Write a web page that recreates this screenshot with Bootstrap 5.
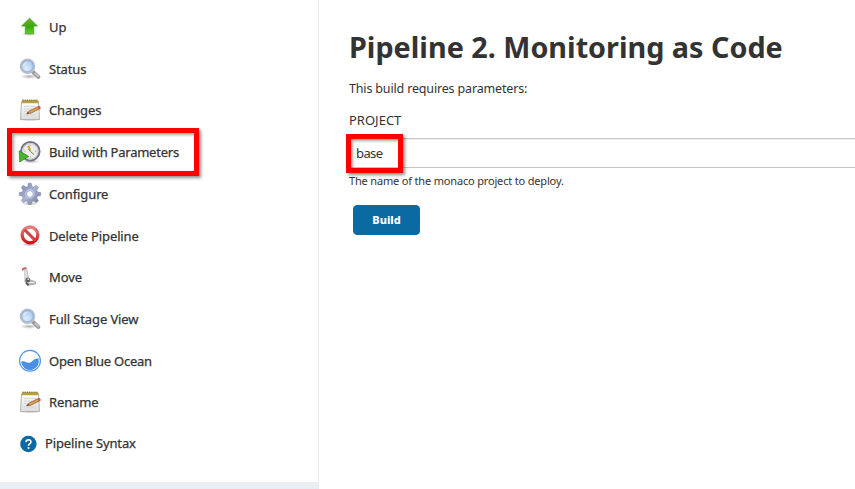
<!DOCTYPE html>
<html lang="en">
<head>
<meta charset="utf-8">
<meta name="viewport" content="width=device-width, initial-scale=1">
<title>Pipeline 2. Monitoring as Code</title>
<link href="https://cdn.jsdelivr.net/npm/bootstrap@5.3.0/dist/css/bootstrap.min.css" rel="stylesheet">
<style>
body{font-family:"Noto Sans","Open Sans",sans-serif;color:#333;font-size:13px;background:#fff}
.side-panel{width:319px;background:#e8eef1;padding-bottom:7px}
.side-inner{background:#fff;border-right:1px solid #e8eef1;padding:6.27px 0 0 18px}
.task{height:41.7px;color:#333;font-weight:400;line-height:18px;gap:7px;letter-spacing:-.12px;-webkit-text-stroke:.25px #333}
.task:hover{color:#333}
.task svg{width:24px;height:24px;flex:none}
.task span{white-space:nowrap}
.task .long-label{letter-spacing:-.24px}
.task.syntax{gap:6px;height:39.8px}
.task.syntax svg{width:21px}
.marker{border:5px solid #fe0000;box-shadow:2px 2px 3px rgba(0,0,0,.45),inset 2px 2px 3px rgba(0,0,0,.35);pointer-events:none}
.marker-task{left:-11px;top:-3.3px;width:192px;height:48px}
.marker-value{left:-3px;top:-4px;width:57px;height:39px}
.main-panel{padding:27px 0 0 30px;min-width:0}
.title{font-size:28.75px;font-weight:700;line-height:40px;margin-bottom:12px}
.intro{line-height:20px;margin-bottom:11px;font-size:12.5px;letter-spacing:-.16px}
.param-name{line-height:20px;margin-bottom:8px;font-size:13px}
.value-input{height:30px;width:calc(100% + 10px);border:1px solid #c6c6c6;border-radius:3px;padding:0 6px;font-size:13px;letter-spacing:-.6px;color:#333;box-shadow:inset 0 1px 1px rgba(0,0,0,.07)}
.hint{font-size:11px;line-height:16px;margin-top:5px;margin-bottom:16px;letter-spacing:-.17px}
.build-btn{background:#0b6aa2;border-color:#0b6aa2;color:#fff;width:67px;height:30px;margin-left:4px;padding:0;font-size:11px;font-weight:800;border-radius:4px}
</style>
</head>
<body class="vh-100 overflow-hidden">
<svg width="0" height="0" class="position-absolute" aria-hidden="true">
<defs>
<linearGradient id="green" x2="0" y2="1"><stop stop-color="#72ae3b"/><stop offset=".55" stop-color="#3ca80c"/><stop offset="1" stop-color="#5fd324"/></linearGradient>
<linearGradient id="paper" x2="0" y2="1"><stop stop-color="#fff"/><stop offset="1" stop-color="#dcdcdc"/></linearGradient>
<linearGradient id="redg" x2="0" y2="1"><stop stop-color="#e98080"/><stop offset="1" stop-color="#cf1010"/></linearGradient>
<linearGradient id="gearg" x2="1" y2="1"><stop stop-color="#7b83ac"/><stop offset=".5" stop-color="#a9b3d2"/><stop offset="1" stop-color="#6d7499"/></linearGradient>
<radialGradient id="lens" cx=".4" cy=".65"><stop stop-color="#e0edfb"/><stop offset="1" stop-color="#afcdf0"/></radialGradient>
<radialGradient id="shade"><stop stop-color="#000" stop-opacity=".3"/><stop offset="1" stop-color="#000" stop-opacity="0"/></radialGradient>
<symbol id="search" viewBox="0 0 24 24">
<ellipse cx="11" cy="19.5" rx="9" ry="2.5" fill="url(#shade)"/>
<path d="M14.5 14.5L20.5 20" stroke="#9b9b9b" stroke-width="3.8" stroke-linecap="round"/><path d="M16.8 16.2L20.8 19.6" stroke="#cecece" stroke-width="1.6"/>
<circle cx="9.5" cy="9.2" r="7" fill="url(#lens)" stroke="#bcc1c8" stroke-width="1.6"/><circle cx="9.5" cy="9.2" r="5.8" fill="none" stroke="#8eabd6" stroke-width="1"/><path d="M5.6 9Q6 5.7 9.6 5.5" fill="none" stroke="#fff" stroke-opacity=".5" stroke-width="1.2"/>
</symbol>
<symbol id="notepad" viewBox="0 0 24 24">
<ellipse cx="12" cy="21.5" rx="11" ry="2" fill="url(#shade)"/>
<path d="M3.5 3.5H20.5L21.5 21.5H2.5Z" fill="url(#paper)" stroke="#b3b3ae" stroke-width="1"/>
<path d="M4 2.2H20.2V5.2H4Z" fill="#b5a03c"/><path d="M4.5 2.3H20" stroke="#81712d" stroke-width="1.4" stroke-dasharray="1 1.2"/>
<path d="M6 8.5H18M6 11H14M6 13.5H11M5.5 17H18" stroke="#d1d1cf" stroke-width=".8"/>
<path d="M8.7 15.6L11.5 12.8L21 8.2L22.2 10.5L12.6 15.3Z" fill="#dda254" stroke="#805129" stroke-width=".7"/><path d="M19.6 9L21 8.2Q23 8 22.5 10.3L20.8 11.2Z" fill="#df5145"/><path d="M8.2 16L10.3 14L11 15.2Z" fill="#403327"/>
</symbol>
</defs>
</svg>
<div class="d-flex h-100">
<aside class="side-panel d-flex flex-column flex-shrink-0">
<nav class="side-inner flex-grow-1 d-flex flex-column">
<a class="task d-flex align-items-center text-decoration-none" href="#"><svg viewBox="0 0 24 24"><ellipse cx="11.5" cy="19" rx="8" ry="2" fill="url(#shade)"/><path d="M11.5 3.2L19.4 11H15.7V18.7H7.3V11H3.6Z" fill="url(#green)" stroke="#4b9d24" stroke-width=".8"/></svg><span>Up</span></a>
<a class="task d-flex align-items-center text-decoration-none" href="#"><svg><use href="#search"/></svg><span>Status</span></a>
<a class="task d-flex align-items-center text-decoration-none" href="#"><svg><use href="#notepad"/></svg><span>Changes</span></a>
<a class="task d-flex align-items-center text-decoration-none position-relative" href="#"><svg viewBox="0 0 24 24"><ellipse cx="13" cy="21.5" rx="9" ry="2" fill="url(#shade)"/><circle cx="12.3" cy="11.3" r="9.3" fill="#ededE8" stroke="#73738f" stroke-width="1.9"/><circle cx="12.3" cy="11.3" r="7.7" fill="none" stroke="#c8c8cb"/><path d="M12.2 4.8V6M18.5 11.3H17M12.3 17.5V16.3M6.2 11.3H7.4" stroke="#999" stroke-width=".8"/><path d="M9.3 6.2L11.3 5.5L13.3 11L10.8 9.5Z" fill="#d3a52c"/><path d="M12.5 11.5L10.5 9M12.5 11.5L16 14.5" stroke="#77777d" stroke-width="1"/><path d="M1.2 10.8L10.7 16.5L1.7 22Z" fill="#48b52a" stroke="#258319" stroke-width=".7"/></svg><span class="long-label">Build with Parameters</span><i class="marker marker-task position-absolute"></i></a>
<a class="task d-flex align-items-center text-decoration-none" href="#"><svg viewBox="0 0 24 24"><ellipse cx="12" cy="21.5" rx="9" ry="2" fill="url(#shade)"/><path fill="url(#gearg)" stroke="#747b9f" stroke-width=".5" fill-rule="evenodd" d="M10.4 1.2H13.2L13.8 4.5L15.9 5.3L18.4 3.3L20.5 5.4L18.7 8L19.5 10.1L22.6 10.6V13.6L19.5 14.2L18.7 16.1L20.5 18.8L18.3 20.8L15.8 19L13.7 19.8L13.1 22.5H10.4L9.9 19.8L7.9 18.9L5.3 20.7L3.3 18.6L5.1 16L4.3 14L1.3 13.4V10.6L4.3 10L5.1 8.1L3.3 5.5L5.4 3.3L8 5.3L9.9 4.5ZM11.9 8.7A3.3 3.3 0 1 0 11.9 15.3A3.3 3.3 0 1 0 11.9 8.7Z"/><circle cx="11.9" cy="12" r="4.1" fill="none" stroke="#c6cbdf" stroke-width="1.1"/></svg><span>Configure</span></a>
<a class="task d-flex align-items-center text-decoration-none" href="#"><svg viewBox="0 0 24 24"><ellipse cx="12" cy="20.5" rx="9" ry="2" fill="url(#shade)"/><circle cx="12" cy="11" r="7.7" fill="#fff" stroke="url(#redg)" stroke-width="3"/><path d="M6.7 5.8L17.3 16.4" stroke="#d64040" stroke-width="3"/><circle cx="12" cy="11" r="9.2" fill="none" stroke="#c63535" stroke-width=".5"/></svg><span>Delete Pipeline</span></a>
<a class="task d-flex align-items-center text-decoration-none" href="#"><svg viewBox="0 0 24 24"><path d="M6.7 4L8.6 3.5L10.8 14L9.2 16.5H7Z" fill="#e3e3e3" stroke="#aaa" stroke-width=".7"/><path d="M3.8 5.2L4.6 3.1L8.1 2L8.5 3.5L5.9 4.3L5.3 5.8Z" fill="#c94f4f"/><path d="M6.8 16L10.5 14.2L17.2 16.7L17.6 19L9.5 20.3Z" fill="#b7b7b7" stroke="#8c8c8c" stroke-width=".6"/><circle cx="9.8" cy="14.9" r="2.3" fill="#5e5e5e"/><circle cx="10.2" cy="14.2" r=".9" fill="#ddd"/><path d="M8 17.7L10.5 20.3" stroke="#555" stroke-width="1.7"/><path d="M11 17.5H16.5" stroke="#eee"/></svg><span>Move</span></a>
<a class="task d-flex align-items-center text-decoration-none" href="#"><svg><use href="#search"/></svg><span>Full Stage View</span></a>
<a class="task d-flex align-items-center text-decoration-none" href="#"><svg viewBox="0 0 24 24"><circle cx="12" cy="11.8" r="10.4" fill="#fff" stroke="#5095e6" stroke-width="1.2"/><path d="M3.2 12.8C6.5 11.2 8 14.2 11.2 13.8C14.8 13.4 15.4 8.6 20.6 9.6A8.9 8.9 0 1 1 3.2 12.8Z" fill="#4a90e2"/></svg><span class="long-label">Open Blue Ocean</span></a>
<a class="task d-flex align-items-center text-decoration-none" href="#"><svg><use href="#notepad"/></svg><span>Rename</span></a>
<a class="task syntax d-flex align-items-center text-decoration-none" href="#"><svg viewBox="0 0 21 24"><circle cx="10.4" cy="13" r="8.2" fill="#0b6aa2"/><path d="M8 11.1Q8.1 8.8 10.5 8.8Q12.9 8.9 12.9 10.9Q12.9 12.1 11.4 13Q10.5 13.6 10.5 14.7" fill="none" stroke="#fff" stroke-width="1.6"/><circle cx="10.5" cy="16.9" r="1" fill="#fff"/></svg><span>Pipeline Syntax</span></a>
</nav>
</aside>
<main class="main-panel flex-grow-1">
<h1 class="title text-nowrap">Pipeline 2. Monitoring as Code</h1>
<p class="intro">This build requires parameters:</p>
<form>
<label class="param-name d-block" for="project">PROJECT</label>
<div class="position-relative"><input id="project" class="value-input d-block" type="text" value="base"><i class="marker marker-value position-absolute"></i></div>
<p class="hint">The name of the monaco project to deploy.</p>
<button class="btn build-btn" type="button">Build</button>
</form>
</main>
</div>
<script src="https://cdn.jsdelivr.net/npm/bootstrap@5.3.0/dist/js/bootstrap.bundle.min.js"></script>
</body>
</html>
